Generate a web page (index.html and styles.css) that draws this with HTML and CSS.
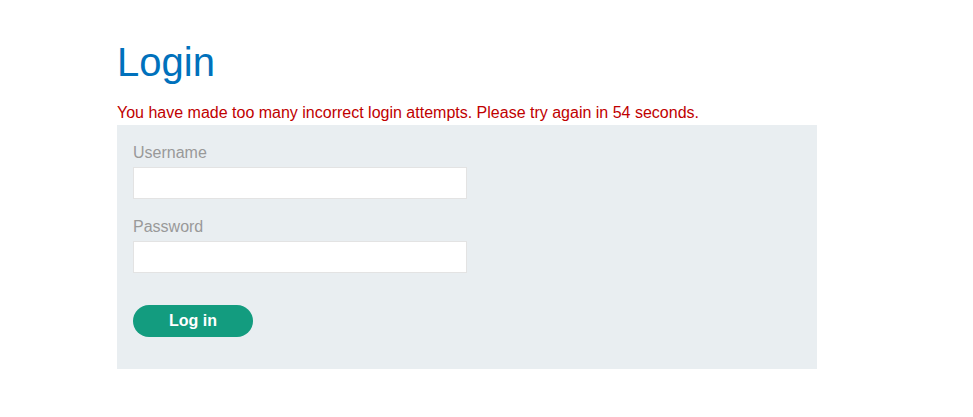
FILE: index.html
```html
<!DOCTYPE html>
<html>
<head>
<meta charset="utf-8">
<link rel="stylesheet" href="styles.css">
</head>
<body>
<div class="page">
  <h1 class="title">Login</h1>
  <p class="error">You have made too many incorrect login attempts. Please try again in 54 seconds.</p>
  <form class="panel">
    <label class="label" for="u">Username</label>
    <input class="field" id="u" type="text">
    <label class="label label-next" for="p">Password</label>
    <input class="field" id="p" type="password">
    <button class="button" type="button">Log in</button>
  </form>
</div>
</body>
</html>
```

FILE: styles.css
```css
html, body {
  margin: 0;
  padding: 0;
  background: #fff;
  font-family: "Liberation Sans", Arial, sans-serif;
}
.page {
  padding-left: 117px;
  width: 700px;
}
.title {
  margin: 39px 0 0 0;
  font-size: 40px;
  line-height: 46px;
  font-weight: normal;
  color: #0071bc;
}
.error {
  margin: 19px 0 0 0;
  font-size: 16px;
  line-height: 18px;
  color: #c00000;
  height: 21px;
}
.panel {
  display: flex;
  flex-direction: column;
  align-items: flex-start;
  background: #e9eef1;
  padding: 19px 16px 32px 16px;
}
.label {
  font-size: 16px;
  line-height: 18px;
  color: #999;
}
.label-next {
  margin-top: 19px;
}
.field {
  box-sizing: border-box;
  margin: 5px 0 0 0;
  width: 334px;
  height: 32px;
  border: 1px solid #e3e3e3;
  background: #fff;
  padding: 0 8px;
  font-size: 16px;
}
.button {
  margin-top: 32px;
  width: 120px;
  height: 32px;
  border: none;
  border-radius: 16px;
  background: #139c7f;
  color: #fff;
  font-family: "Liberation Sans", Arial, sans-serif;
  font-weight: bold;
  font-size: 16px;
  padding: 0;
}
```
